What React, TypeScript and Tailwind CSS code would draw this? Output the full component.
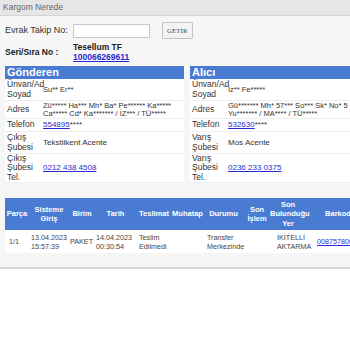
const font = { fontFamily: '"Liberation Sans", Arial, sans-serif' };

type Row = { label: string[]; value: React.ReactNode; h: string };

function Party({ title, rows }: { title: string; rows: Row[] }) {
  return (
    <div className="w-[179px] shrink-0">
      <div className="h-[13px] bg-[#4a7bd2] px-[2px] text-[11px] leading-[13px] font-bold text-white">{title}</div>
      {rows.map((r, i) => (
        <div key={i} className={`flex bg-white border-b border-[#eeeeee] ${r.h}`}>
          <div className="w-[37px] shrink-0 flex flex-col justify-center pl-[2px] text-[8.5px] leading-[9.5px] text-[#333] whitespace-nowrap">
            {r.label.map((l) => (
              <span key={l}>{l}</span>
            ))}
          </div>
          <div className="flex-1 flex items-center pl-[1px] text-[7.5px] leading-[8px] text-[#333] whitespace-nowrap">{r.value}</div>
        </div>
      ))}
    </div>
  );
}

function Link({ children }: { children: React.ReactNode }) {
  return <span className="text-[#2a2ad0] underline">{children}</span>;
}

const cols = [
  { h: ["Parça"], w: "w-[24px]" },
  { h: ["Sisteme", "Giriş"], w: "w-[40px]" },
  { h: ["Birim"], w: "w-[26px]" },
  { h: ["Tarih"], w: "w-[41px]" },
  { h: ["Teslimat"], w: "w-[36px]" },
  { h: ["Muhatap"], w: "w-[31px]" },
  { h: ["Durumu"], w: "w-[41px]" },
  { h: ["Son", "İşlem"], w: "w-[26px]" },
  { h: ["Son", "Bulunduğu", "Yer"], w: "w-[36px]" },
  { h: ["Barkod"], w: "w-[64px]" },
];

const data: { c: React.ReactNode; p: string }[] = [
  { c: "1/1", p: "pl-[4px]" },
  { c: <>13.04.2023<br />15:57:39</>, p: "pl-[2px]" },
  { c: "PAKET", p: "pl-[1px]" },
  { c: <>14.04.2023<br />00:30:54</>, p: "pl-[1px]" },
  { c: <>Teslim<br />Edilmedi</>, p: "pl-[3px]" },
  { c: "", p: "" },
  { c: <>Transfer<br />Merkezinde</>, p: "pl-[4px]" },
  { c: "", p: "" },
  { c: <>İKİTELLİ<br />AKTARMA</>, p: "pl-[7px]" },
  { c: <Link>008757800512</Link>, p: "pl-[11px]" },
];

export default function App() {
  return (
    <div className="w-[350px] h-[350px] overflow-hidden bg-white" style={font}>
      <div className="w-[380px] bg-[#f6f6f6] border-b-[2px] border-[#d6d6d6]">
        <div className="h-[16px] bg-[#e6e6e6] border-b border-[#d4d4d4] px-[3px] text-[8.5px] leading-[15px] text-[#666]">
          Kargom Nerede
        </div>
        <div className="px-[5px] pt-[6px]">
          <div className="flex items-center h-[17px]">
            <span className="w-[68px] text-[9px] text-[#333]">Evrak Takip No:</span>
            <div className="w-[77px] h-[14px] bg-white border border-[#c8c8c8]" />
            <button
              className="ml-[12px] h-[17px] px-[4px] bg-[#f3f3f3] border border-[#c4c4c4] rounded-[1px] text-[6.5px] text-[#444] tracking-[0.3px]"
              style={{ fontFamily: '"Liberation Serif", serif' }}
            >
              GETİR
            </button>
          </div>
          <div className="flex items-center mt-[1px] h-[24px]">
            <span className="w-[68px] text-[8.5px] font-bold text-[#222] pt-[1px]">Seri/Sıra No :</span>
            <div className="flex flex-col text-[8.5px] leading-[10px] font-bold">
              <span className="text-[#222]">Tesellum TF</span>
              <Link>100066269611</Link>
            </div>
          </div>
          <div className="flex gap-[6px] mt-[2px]">
            <Party
              title="Gönderen"
              rows={[
                { label: ["Ünvan/Ad", "Soyad"], value: "Su** Er**", h: "h-[22px]" },
                {
                  label: ["Adres"],
                  value: <span>Zü***** Ha*** Mh* Ba* Pe****** Ka*****<br />Ca***** Cd* Ka******* / İZ*** / TÜ*****</span>,
                  h: "h-[18px]",
                },
                { label: ["Telefon"], value: <span className="text-[8px]"><Link>554895</Link>****</span>, h: "h-[13px]" },
                { label: ["Çıkış", "Şubesi"], value: <span className="text-[8px]">Tekstilkent Acente</span>, h: "h-[22px]" },
                { label: ["Çıkış", "Şubesi", "Tel."], value: <span className="text-[8px]"><Link>0212 438 4508</Link></span>, h: "h-[29px]" },
              ]}
            />
            <Party
              title="Alıcı"
              rows={[
                { label: ["Ünvan/Ad", "Soyad"], value: "İz** Fe*****", h: "h-[22px]" },
                {
                  label: ["Adres"],
                  value: <span>Gü******* Mh* 57*** So*** Sk* No* 5<br />Yu******* / MA**** / TÜ*****</span>,
                  h: "h-[18px]",
                },
                { label: ["Telefon"], value: <span className="text-[8px]"><Link>532630</Link>****</span>, h: "h-[13px]" },
                { label: ["Varış", "Şubesi"], value: <span className="text-[8px]">Mos Acente</span>, h: "h-[22px]" },
                { label: ["Varış", "Şubesi", "Tel."], value: <span className="text-[8px]"><Link>0236 233 0375</Link></span>, h: "h-[29px]" },
              ]}
            />
          </div>
          <table className="w-[365px] mt-[15px] mb-[14px] table-fixed border-collapse">
            <thead>
              <tr className="h-[32px] bg-[#4a7bd2]">
                {cols.map((c, i) => (
                  <th key={i} className={`${c.w} p-0 text-center text-[7.5px] leading-[9.5px] font-bold text-white whitespace-nowrap`}>
                    {c.h.map((l) => (
                      <div key={l}>{l}</div>
                    ))}
                  </th>
                ))}
              </tr>
            </thead>
            <tbody>
              <tr className="h-[23px] bg-white">
                {data.map((d, i) => (
                  <td key={i} className={`${d.p} pr-0 text-left align-middle text-[7.2px] leading-[9px] text-[#444] whitespace-nowrap overflow-visible`}>
                    {d.c}
                  </td>
                ))}
              </tr>
            </tbody>
          </table>
        </div>
      </div>
    </div>
  );
}
